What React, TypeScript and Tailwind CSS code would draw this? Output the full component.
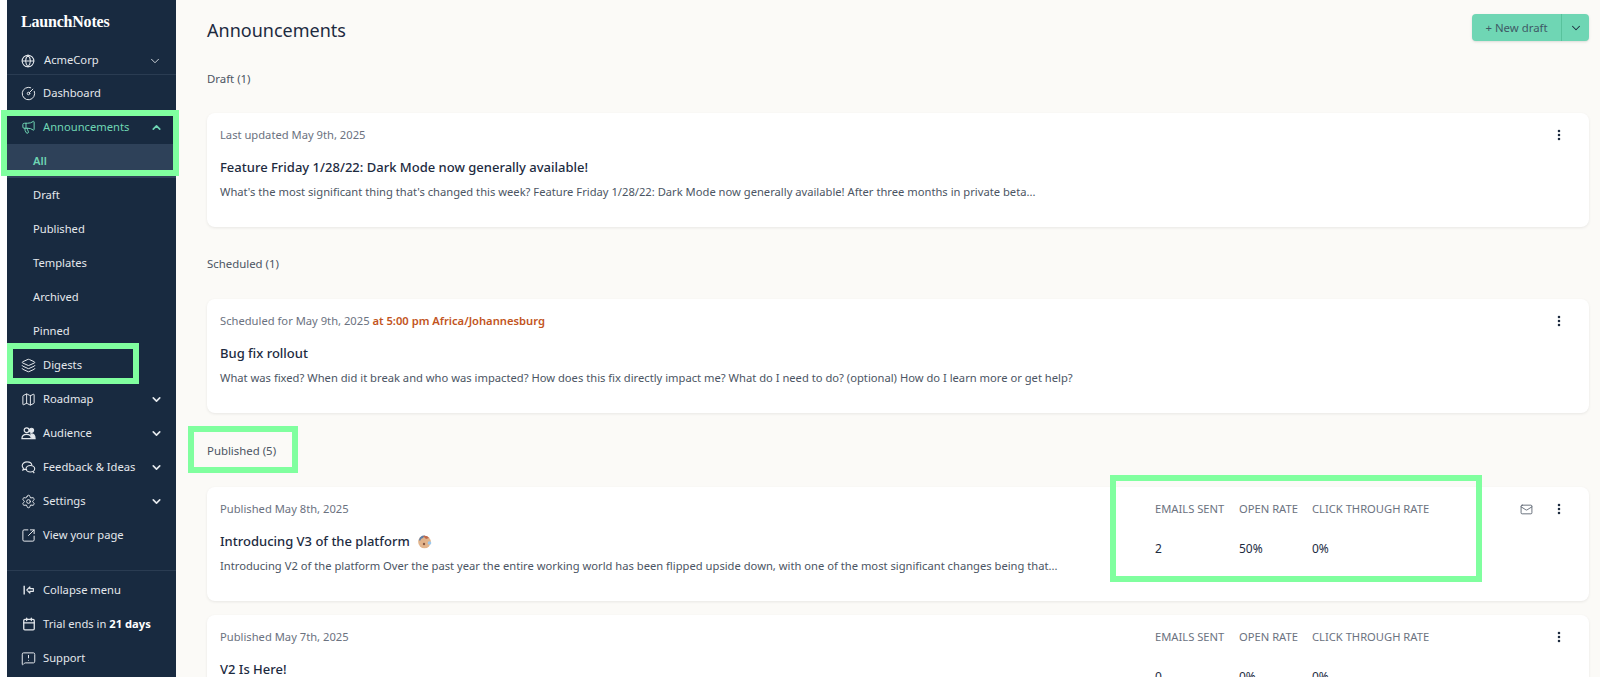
import React from 'react';
import {
  Globe,
  ChevronDown,
  ChevronUp,
  CircleGauge,
  Megaphone,
  Layers,
  Map,
  Settings,
  SquareArrowOutUpRight,
  Calendar,
  MessageSquareWarning,
  Mail,
  EllipsisVertical,
} from 'lucide-react';

const FONT = "font-['Noto_Sans','Open_Sans',sans-serif]";

const AudienceIcon = ({ size = 16 }: { size?: number }) => (
  <svg width={size} height={size} viewBox="0 0 16 16" fill="none" stroke="currentColor" strokeWidth="1.3">
    <circle cx="6" cy="4.5" r="2.6" />
    <path d="M1 13.5c0-3 2.2-4.6 5-4.6s5 1.6 5 4.6z" />
    <circle cx="11.2" cy="4.6" r="2.2" fill="currentColor" />
    <path d="M10.5 8.5c2.6 0 4.5 1.6 4.5 5h-3z" fill="currentColor" />
  </svg>
);

const FeedbackIcon = ({ size = 16 }: { size?: number }) => (
  <svg width={size} height={size} viewBox="0 0 16 16" fill="none" stroke="currentColor" strokeWidth="1.2">
    <path d="M6.5 2C3.6 2 1.3 3.7 1.3 6c0 1.1.5 2 1.3 2.7L2 10.8l2.3-1c.7.2 1.4.3 2.2.3" />
    <path d="M6.5 2c2.8 0 4.9 1.5 5.1 3.6" />
    <ellipse cx="10" cy="9.3" rx="4.6" ry="3.5" />
    <path d="M12.6 12.2l1.6 1.8" />
  </svg>
);

const CollapseIcon = ({ size = 16 }: { size?: number }) => (
  <svg width={size} height={size} viewBox="0 0 16 16" fill="none" stroke="currentColor" strokeWidth="1.3">
    <path d="M2.5 3v10" strokeWidth="1.6" />
    <path d="M9 4.5L5.5 8 9 11.5V9.5h4v-3H9z" strokeLinejoin="round" />
  </svg>
);

const NavRow = ({
  icon: Icon,
  label,
  chevron,
  up,
  active,
  size = 15,
}: {
  icon: React.ElementType;
  label: string;
  chevron?: boolean;
  up?: boolean;
  active?: boolean;
  size?: number;
}) => (
  <div className={`flex h-[34px] items-center pl-[14px] pr-[13px] text-[11.2px] ${active ? 'text-[#6fd6b4]' : 'text-[#e4e8ec]'}`}>
    <span className="flex w-[15px] shrink-0 justify-center">
      <Icon size={size} strokeWidth={1.6} />
    </span>
    <span className="ml-[7px] flex-1">{label}</span>
    {chevron && <ChevronDown size={13} strokeWidth={3} />}
    {up && <ChevronUp size={13} strokeWidth={3} />}
  </div>
);

const SubRow = ({ label, active }: { label: string; active?: boolean }) => (
  <div className={`flex h-[34px] items-center pl-[26px] text-[11.2px] ${active ? 'bg-[#2e4159] font-semibold text-[#6fd6b4]' : 'text-[#e4e8ec]'}`}>
    {label}
  </div>
);

const Sidebar = () => (
  <aside className="flex h-[677px] w-[169px] shrink-0 flex-col bg-[#182a40]">
    <div className="flex h-[47px] items-end pb-[13px] pl-[14px] font-['Liberation_Serif',serif] text-[16px] font-bold tracking-[-0.2px] text-white">
      LaunchNotes
    </div>
    <div className="flex h-[28px] items-center border-b border-[#2a3c52] pl-[14px] pr-[14px] text-[11.2px] text-[#e4e8ec]">
      <Globe size={14} strokeWidth={1.8} />
      <span className="ml-[9px] flex-1">AcmeCorp</span>
      <ChevronDown size={14} strokeWidth={1.5} />
    </div>
    <div className="h-[1px]" />
    <NavRow icon={CircleGauge} label="Dashboard" />
    <NavRow icon={Megaphone} label="Announcements" active up size={16} />
    <SubRow label="All" active />
    <SubRow label="Draft" />
    <SubRow label="Published" />
    <SubRow label="Templates" />
    <SubRow label="Archived" />
    <SubRow label="Pinned" />
    <NavRow icon={Layers} label="Digests" />
    <NavRow icon={Map} label="Roadmap" chevron />
    <NavRow icon={AudienceIcon} label="Audience" chevron size={17} />
    <NavRow icon={FeedbackIcon} label="Feedback & Ideas" chevron size={17} />
    <NavRow icon={Settings} label="Settings" chevron />
    <NavRow icon={SquareArrowOutUpRight} label="View your page" />
    <div className="mt-auto border-t border-[#2a3c52] pb-[2px] pt-[2px]">
      <NavRow icon={CollapseIcon} label="Collapse menu" size={14} />
      <div className="flex h-[34px] items-center pl-[14px] text-[11.2px] text-[#e4e8ec]">
        <span className="flex w-[15px] justify-center">
          <Calendar size={14} strokeWidth={2.2} />
        </span>
        <span className="ml-[7px]">
          Trial ends in <b className="font-bold text-white">21 days</b>
        </span>
      </div>
      <NavRow icon={MessageSquareWarning} label="Support" />
    </div>
  </aside>
);

const Card = ({
  meta,
  title,
  body,
  emoji,
  stats,
  mail,
  className,
}: {
  meta: React.ReactNode;
  title: string;
  body: string;
  emoji?: boolean;
  stats?: string[];
  mail?: boolean;
  className?: string;
}) => (
  <div className={`flex h-[114px] shrink-0 rounded-lg bg-white pl-[13px] pr-[24px] pt-[13px] shadow-[0_1px_3px_rgba(0,0,0,0.08)] ${className ?? ''}`}>
    <div className="flex-1">
      <div className="text-[11.2px] leading-[18px] text-[#6b7280]">{meta}</div>
      <div className="mt-[13px] flex items-center text-[13px] font-medium leading-[20px] text-[#1d2b3f]">
        {title}
        {emoji && (
          <svg width="15" height="15" viewBox="0 0 15 15" className="ml-[7px]">
            <circle cx="7.5" cy="8" r="6.3" fill="#e2b48c" />
            <path d="M2 6 Q3 1 8 1.5 L6 4 Q4 4 3 7 Z" fill="#5f7fa8" />
            <path d="M6 2 Q10 1 12 4 L9 5 Z" fill="#c0694a" />
            <circle cx="7" cy="10" r="1.2" fill="#8a5a44" />
            <circle cx="12.5" cy="9" r="1.8" fill="#9cc9ee" />
          </svg>
        )}
      </div>
      {body && <div className="mt-[6px] text-[11.2px] leading-[18px] text-[#4b5563]">{body}</div>}
    </div>
    {stats && (
      <div className="grid h-fit grid-cols-[84px_73px_120px]">
        <div className="text-[11.2px] leading-[18px] text-[#6b7280]">EMAILS SENT</div>
        <div className="text-[11.2px] leading-[18px] text-[#6b7280]">OPEN RATE</div>
        <div className="text-[11.2px] leading-[18px] text-[#6b7280]">CLICK THROUGH RATE</div>
        {stats.map((s, i) => (
          <div key={i} className="mt-[22px] text-[12px] leading-[18px] text-[#1d2b3f]">
            {s}
          </div>
        ))}
      </div>
    )}
    <div className={`flex h-[18px] items-center justify-end ${stats ? 'w-[133px]' : 'w-[30px]'}`}>
      {mail && <Mail size={13} strokeWidth={1.5} className="mr-[19px] text-[#4b5563]" />}
      <EllipsisVertical size={14} strokeWidth={2.4} className="-mr-[1px] text-[#1d2b3f]" />
    </div>
  </div>
);

const SectionLabel = ({ children, className }: { children: string; className?: string }) => (
  <div className={`text-[11.4px] leading-[18px] text-[#4b5563] ${className ?? ''}`}>{children}</div>
);

export default function App() {
  return (
    <div className={`relative flex h-[677px] w-[1600px] overflow-hidden bg-white ${FONT}`}>
      <div className="w-[7px] shrink-0 bg-white" />
      <Sidebar />
      <main className="flex min-w-0 flex-1 flex-col bg-[#fbfaf7] pl-[31px] pr-[11px] pt-[14px]">
        <div className="flex h-[27px] items-center justify-between">
          <h1 className="mt-[6px] text-[18px] font-normal text-[#1d2b3f]">Announcements</h1>
          <div className="flex h-[27px] overflow-hidden rounded-[4px] bg-[#6fd6b4] text-[11.4px] text-[#3f5a66] shadow-sm">
            <div className="flex w-[90px] items-center justify-center border-r border-[#58c29c]">+ New draft</div>
            <div className="flex w-[27px] items-center justify-center text-[#1d2b3f]">
              <ChevronDown size={14} strokeWidth={1.8} />
            </div>
          </div>
        </div>
        <SectionLabel className="mt-[29px]">Draft (1)</SectionLabel>
        <Card
          className="mt-[25px]"
          meta="Last updated May 9th, 2025"
          title="Feature Friday 1/28/22: Dark Mode now generally available!"
          body="What's the most significant thing that's changed this week? Feature Friday 1/28/22: Dark Mode now generally available! After three months in private beta..."
        />
        <SectionLabel className="mt-[28px]">Scheduled (1)</SectionLabel>
        <Card
          className="mt-[26px]"
          meta={
            <>
              Scheduled for May 9th, 2025 <b className="font-semibold text-[#c2541d]">at 5:00 pm Africa/Johannesburg</b>
            </>
          }
          title="Bug fix rollout"
          body="What was fixed? When did it break and who was impacted? How does this fix directly impact me? What do I need to do? (optional) How do I learn more or get help?"
        />
        <SectionLabel className="mt-[29px]">Published (5)</SectionLabel>
        <Card
          className="mt-[27px]"
          meta="Published May 8th, 2025"
          title="Introducing V3 of the platform"
          emoji
          body="Introducing V2 of the platform Over the past year the entire working world has been flipped upside down, with one of the most significant changes being that..."
          stats={['2', '50%', '0%']}
          mail
        />
        <Card
          className="mt-[14px]"
          meta="Published May 7th, 2025"
          title="V2 Is Here!"
          body=""
          stats={['0', '0%', '0%']}
        />
      </main>

      {/* green annotation boxes drawn on top of the screenshot */}
      <div className="pointer-events-none absolute left-[1px] top-[110px] h-[66px] w-[178px] border-[6px] border-[#80ff9f]" />
      <div className="pointer-events-none absolute left-[7px] top-[343px] h-[41px] w-[132px] border-[6px] border-[#80ff9f]" />
      <div className="pointer-events-none absolute left-[188px] top-[426px] h-[47px] w-[110px] border-[6px] border-[#80ff9f]" />
      <div className="pointer-events-none absolute left-[1110px] top-[475px] h-[107px] w-[372px] border-[6px] border-[#80ff9f]" />
    </div>
  );
}
